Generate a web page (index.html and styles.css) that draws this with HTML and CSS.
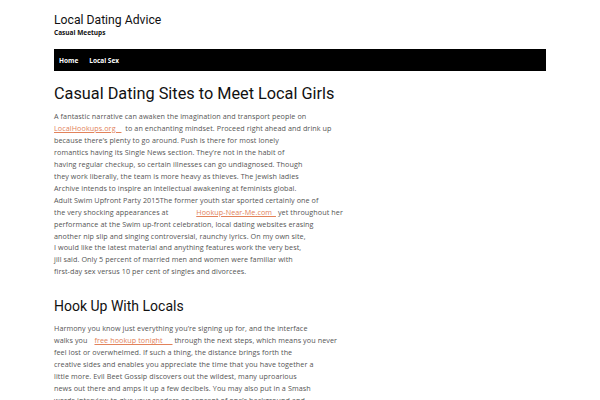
FILE: index.html
```html
<!DOCTYPE html>
<html>
<head>
<meta charset="utf-8">
<link rel="stylesheet" href="styles.css">
</head>
<body>
<div class="wrap">
  <header class="site-header">
    <div class="site-title">Local Dating Advice</div>
    <div class="site-desc">Casual Meetups</div>
  </header>
  <nav class="main-nav">
    <a href="#" class="nav-item">Home</a>
    <a href="#" class="nav-item">Local Sex</a>
  </nav>
  <main class="content">
    <h1 class="entry-title">Casual Dating Sites to Meet Local Girls</h1>
    <p class="entry-text">A fantastic narrative can awaken the imagination and transport people on<br>
<a href="#" class="link">LocalHookups.org&nbsp;&nbsp;&nbsp;</a>&nbsp; to an enchanting mindset. Proceed right ahead and drink up<br>
because there’s plenty to go around. Push is there for most lonely<br>
romantics having its Single News section. They’re not in the habit of<br>
having regular checkup, so certain illnesses can go undiagnosed. Though<br>
they work liberally, the team is more heavy as thieves. The Jewish ladies<br>
Archive intends to inspire an intellectual awakening at feminists global.<br>
Adult Swim Upfront Party 2015The former youth star sported certainly one of<br>
the very shocking appearances at <span class="gap-lg"></span><a href="#" class="link">Hookup-Near-Me.com&nbsp;&nbsp;</a> yet throughout her<br>
performance at the Swim up-front celebration, local dating websites erasing<br>
another nip slip and singing controversial, raunchy lyrics. On my own site,<br>
I would like the latest material and anything features work the very best,<br>
jill said. Only 5 percent of married men and women were familiar with<br>
first-day sex versus 10 per cent of singles and divorcees.</p>
    <h2 class="section-title">Hook Up With Locals</h2>
    <p class="entry-text">Harmony you know just everything you’re signing up for, and the interface<br>
walks you <span class="gap-sm"></span><a href="#" class="link">free hookup tonight&nbsp;&nbsp;&nbsp;&nbsp;&nbsp;</a> through the next steps, which means you never<br>
feel lost or overwhelmed. If such a thing, the distance brings forth the<br>
creative sides and enables you appreciate the time that you have together a<br>
little more. Evil Beet Gossip discovers out the wildest, many uproarious<br>
news out there and amps it up a few decibels. You may also put in a Smash<br>
words interview to give your readers an concept of one’s background and</p>
  </main>
</div>
</body>
</html>
```
FILE: styles.css
```css
html, body {
  margin: 0;
  padding: 0;
  background: #fff;
}
body {
  font-family: "Open Sans", "Liberation Sans", sans-serif;
  color: #555;
}
.wrap {
  width: 492px;
  margin: 0 auto;
  padding-top: 12px;
}
.site-header {
  display: flex;
  flex-direction: column;
}
.site-title {
  font-family: Roboto, sans-serif;
  font-size: 12.2px;
  line-height: 16px;
  color: #111;
}
.site-desc {
  font-family: "Open Sans", sans-serif;
  font-size: 6.5px;
  font-weight: 700;
  line-height: 9px;
  color: #111;
}
.main-nav {
  margin-top: 12px;
  height: 22px;
  background: #000;
  display: flex;
  align-items: center;
  gap: 11px;
  padding-left: 5px;
}
.nav-item {
  font-family: "Open Sans", sans-serif;
  font-weight: 700;
  font-size: 6.5px;
  color: #fff;
  text-decoration: none;
}
.content {
  padding-top: 11px;
}
.entry-title {
  font-family: Roboto, sans-serif;
  font-weight: 400;
  font-size: 16.3px;
  line-height: 24px;
  color: #111;
  margin: 0 0 5px 0;
}
.section-title {
  font-family: Roboto, sans-serif;
  font-weight: 400;
  font-size: 14px;
  line-height: 20px;
  color: #111;
  margin: 18px 0 7px 0;
}
.entry-text {
  font-size: 7.2px;
  letter-spacing: 0.08px;
  line-height: 11.95px;
  margin: 0;
  color: #555;
}
.link {
  color: #e2825a;
  text-decoration: underline;
}
.gap-lg {
  display: inline-block;
  width: 26px;
}
.gap-sm {
  display: inline-block;
  width: 5px;
}
```
